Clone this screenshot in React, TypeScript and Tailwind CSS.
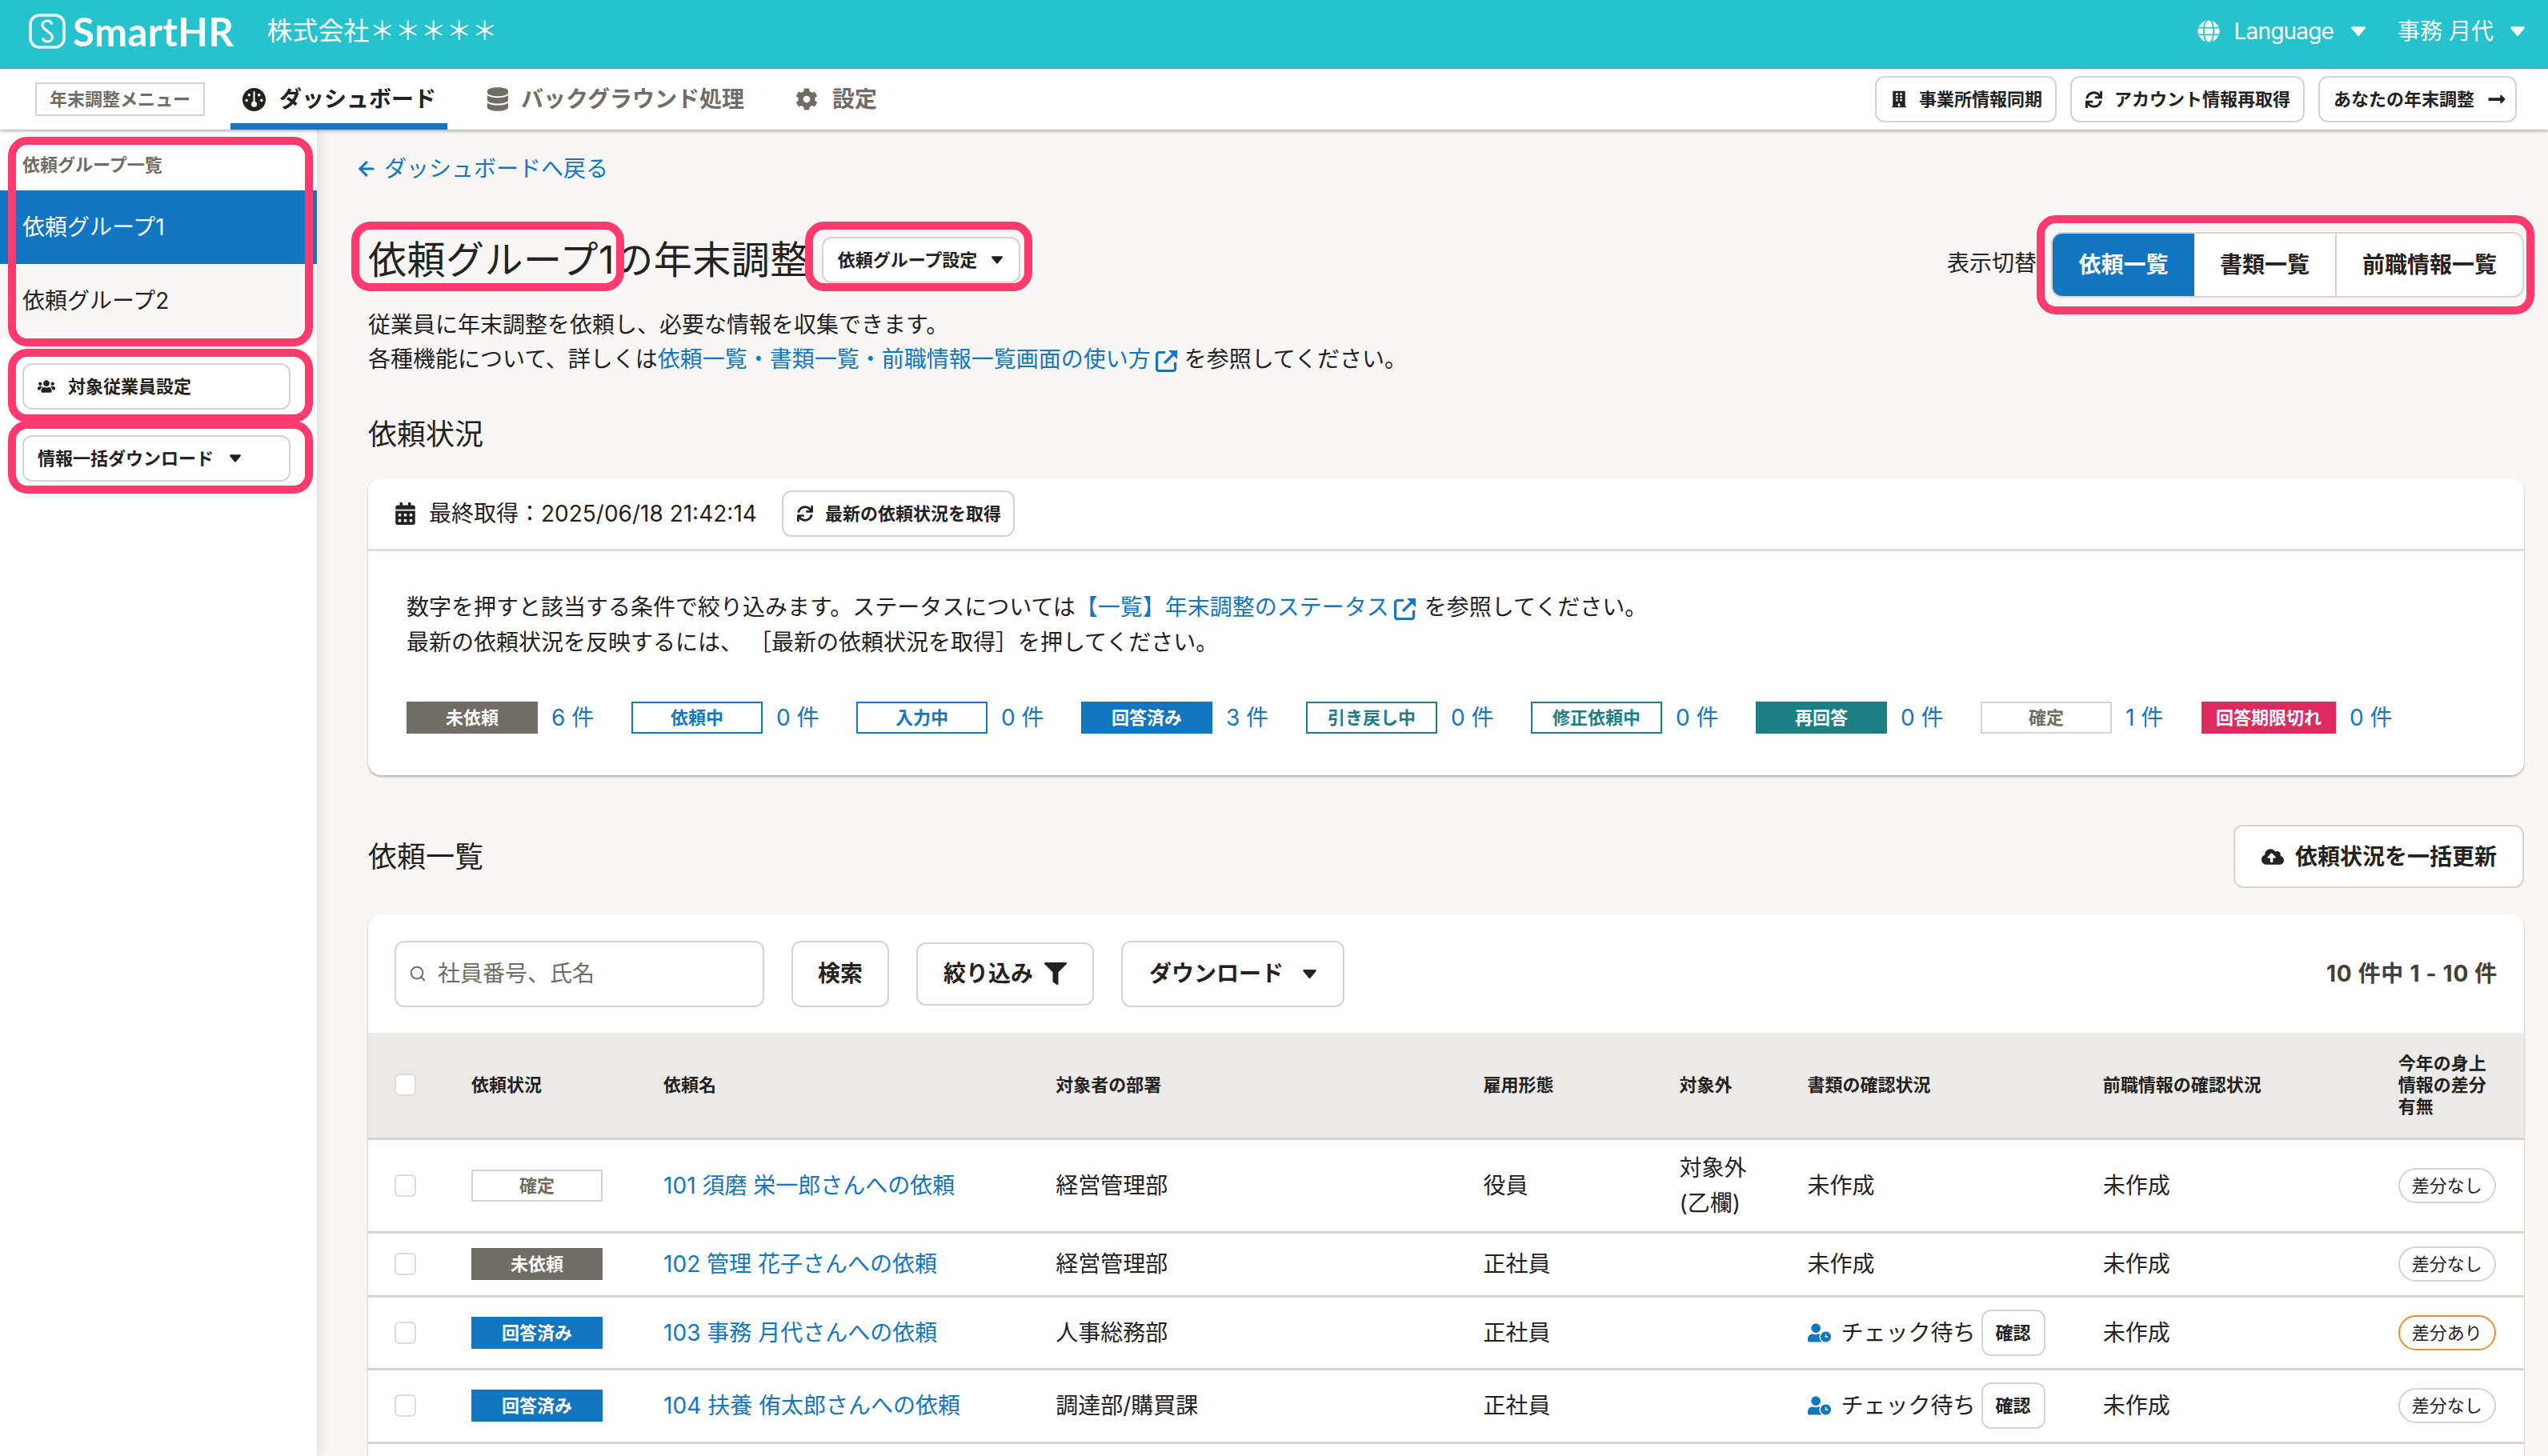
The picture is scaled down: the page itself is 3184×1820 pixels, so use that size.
import React from "react";
import {
  FaDatabase, FaCog, FaBuilding, FaSync, FaLongArrowAltRight, FaCalendarAlt,
  FaUsers, FaGlobe, FaCloudUploadAlt, FaFilter, FaUserClock,
} from "react-icons/fa";
import { Search, ArrowLeft } from "lucide-react";

const Caret = ({ className }: { className: string }) => (
  <svg viewBox="0 0 18 12" className={className} fill="currentColor">
    <path d="M1.6 0h14.8c1.3 0 2 1.5 1.1 2.5L10.1 11.4c-.6.8-1.6.8-2.2 0L.5 2.5C-.4 1.5.3 0 1.6 0z" />
  </svg>
);

const Gauge = () => (
  <svg viewBox="0 0 28 28" className="w-[29px] h-[29px]">
    <circle cx="14" cy="14" r="14" fill="#23221e" />
    <rect x="13" y="4" width="2" height="14" fill="white" />
    <circle cx="14" cy="19.5" r="3.4" fill="white" />
    <circle cx="5" cy="15" r="1.7" fill="white" />
    <circle cx="8" cy="8.5" r="1.7" fill="white" />
    <circle cx="20" cy="8.5" r="1.7" fill="white" />
    <circle cx="23" cy="15" r="1.7" fill="white" />
  </svg>
);

const LinkOut = () => (
  <svg viewBox="0 0 28 28" className="inline-block w-[28px] h-[28px] align-[-6px] ml-[6px]" fill="none" stroke="#1276c1" strokeWidth="3.2">
    <path d="M12 3.5H4.6a3 3 0 0 0-3 3v17.8a2.4 2.4 0 0 0 2.4 2.2h18a2.6 2.6 0 0 0 2.6-2.6V16" />
    <path d="M11 17 23 5" />
    <path d="M16 1h11v11z" fill="#1276c1" stroke="none" />
  </svg>
);

const Ring = ({ className }: { className: string }) => (
  <div className={"absolute pointer-events-none border-[10px] border-[#ff3a6e] rounded-[24px] z-30 " + className} />
);

const Btn = ({ className, children }: { className: string; children: React.ReactNode }) => (
  <button className={"flex items-center bg-white border-2 border-[#d6d3d0] rounded-[12px] font-bold text-[#23221e] whitespace-nowrap " + className}>
    {children}
  </button>
);

type Kind = "gray" | "blueO" | "blue" | "tealO" | "teal" | "line" | "red";
const kinds: Record<Kind, string> = {
  gray: "bg-[#706d65] text-white",
  blueO: "bg-white border-2 border-[#1276c1] text-[#1276c1]",
  blue: "bg-[#1276c1] text-white",
  tealO: "bg-white border-2 border-[#1d7f84] text-[#1d7f84]",
  teal: "bg-[#1d7f84] text-white",
  line: "bg-white border-2 border-[#d6d3d0] text-[#706d65]",
  red: "bg-[#dd2a5f] text-white",
};
const Badge = ({ kind, label, wide }: { kind: Kind; label: string; wide?: boolean }) => (
  <span className={"flex items-center justify-center h-[40px] text-[22px] font-bold whitespace-nowrap " + (wide ? "w-[168px] " : "w-[164px] ") + kinds[kind]}>
    {label}
  </span>
);

const stats: { kind: Kind; label: string; n: number; w: string; wide?: boolean }[] = [
  { kind: "gray", label: "未依頼", n: 6, w: "w-[281px]" },
  { kind: "blueO", label: "依頼中", n: 0, w: "w-[281px]" },
  { kind: "blueO", label: "入力中", n: 0, w: "w-[281px]" },
  { kind: "blue", label: "回答済み", n: 3, w: "w-[281px]" },
  { kind: "tealO", label: "引き戻し中", n: 0, w: "w-[281px]" },
  { kind: "tealO", label: "修正依頼中", n: 0, w: "w-[281px]" },
  { kind: "teal", label: "再回答", n: 0, w: "w-[281px]" },
  { kind: "line", label: "確定", n: 1, w: "w-[276px]" },
  { kind: "red", label: "回答期限切れ", n: 0, w: "w-auto", wide: true },
];

const Check = () => <span className="block w-[27px] h-[28px] rounded-[6px] bg-white border-2 border-[#dedcd9]" />;

const Diff = ({ on }: { on?: boolean }) => (
  <span className={"flex items-center justify-center w-[122px] h-[44px] rounded-full bg-white border-2 text-[22px] " + (on ? "border-[#f08c2e]" : "border-[#d6d3d0]")}>
    {on ? "差分あり" : "差分なし"}
  </span>
);

const Waiting = () => (
  <div className="flex items-center">
    <FaUserClock className="w-[29px] h-[24px] text-[#1276c1] shrink-0" />
    <span className="ml-[13px] w-[175px] whitespace-nowrap">チェック待ち</span>
    <Btn className="w-[80px] h-[58px] justify-center text-[22px]">確認</Btn>
  </div>
);

const rows: { h: string; badge: Kind; status: string; name: string; dept: string; type: string; ex?: boolean; wait?: boolean; on?: boolean }[] = [
  { h: "h-[117px]", badge: "line", status: "確定", name: "101 須磨 栄一郎さんへの依頼", dept: "経営管理部", type: "役員", ex: true },
  { h: "h-[80px]", badge: "gray", status: "未依頼", name: "102 管理 花子さんへの依頼", dept: "経営管理部", type: "正社員" },
  { h: "h-[91px]", badge: "blue", status: "回答済み", name: "103 事務 月代さんへの依頼", dept: "人事総務部", type: "正社員", wait: true, on: true },
  { h: "h-[92px]", badge: "blue", status: "回答済み", name: "104 扶養 侑太郎さんへの依頼", dept: "調達部/購買課", type: "正社員", wait: true },
];

const heads = ["依頼状況", "依頼名", "対象者の部署", "雇用形態", "対象外", "書類の確認状況", "前職情報の確認状況"];

export default function App() {
  return (
    <div className="relative w-[3184px] h-[1820px] overflow-hidden flex flex-col bg-[#f8f7f6] text-[#23221e] text-[28px] leading-[44px] font-['Inter','Noto_Sans_CJK_JP',sans-serif]">
      <header className="h-[86px] shrink-0 bg-[#25c3cd] text-white flex items-center pl-[36px] pr-[29px] pb-[8px]">
        <svg viewBox="0 0 46 44" className="w-[46px] h-[44px]" fill="none" stroke="white">
          <rect x="2" y="2" width="42" height="40" rx="11" strokeWidth="3.4" />
          <path d="M29 13.5c-1-3-3.4-4.5-6-4.5-3.4 0-6 2.5-6 5.5 0 6 12.5 9 12.5 15 0 3-2.6 5.5-6 5.5-3 0-5.5-1.7-6.3-4.5" strokeWidth="3.2" />
        </svg>
        <span className="ml-[9px] text-[49px] leading-[50px] font-bold tracking-[0.5px] font-['Lato',sans-serif]">SmartHR</span>
        <span className="ml-[41px] text-[32px]">株式会社＊＊＊＊＊</span>
        <div className="ml-auto flex items-center">
          <FaGlobe className="w-[28px] h-[28px]" />
          <span className="ml-[17px] tracking-[-0.8px]">Language</span>
          <Caret className="ml-[22px] w-[18px] h-[12px]" />
          <span className="ml-[40px]">事務 月代</span>
          <Caret className="ml-[21px] w-[18px] h-[12px]" />
        </div>
      </header>

      <nav className="relative z-20 h-[76px] shrink-0 bg-white flex items-center pl-[44px] pr-[39px] shadow-[0_2px_4px_rgba(0,0,0,0.3)]">
        <span className="flex items-center justify-center w-[212px] h-[42px] border-2 border-[#d6d3d0] text-[22px] font-bold text-[#706d65]">年末調整メニュー</span>
        <div className="ml-[32px] h-full w-[271px] flex items-center pl-[15px] pt-[8px] border-b-[8px] border-[#1276c1] font-bold">
          <Gauge />
          <span className="ml-[17px]">ダッシュボード</span>
        </div>
        <div className="ml-[50px] flex items-center font-bold text-[#706d65]">
          <FaDatabase className="w-[26px] h-[30px]" />
          <span className="ml-[16px]">バックグラウンド処理</span>
        </div>
        <div className="ml-[64px] flex items-center font-bold text-[#706d65]">
          <FaCog className="w-[28px] h-[28px]" />
          <span className="ml-[18px]">設定</span>
        </div>
        <div className="ml-auto flex items-center gap-[17px] text-[22px]">
          <Btn className="w-[227px] h-[58px] pl-[19px]"><FaBuilding className="w-[18px] h-[22px]" /><span className="ml-[16px]">事業所情報同期</span></Btn>
          <Btn className="w-[293px] h-[58px] pl-[17px]"><FaSync className="w-[21px] h-[21px]" /><span className="ml-[15px]">アカウント情報再取得</span></Btn>
          <Btn className="w-[248px] h-[58px] pl-[17px]"><span>あなたの年末調整</span><FaLongArrowAltRight className="ml-[16px] w-[24px] h-[24px]" /></Btn>
        </div>
      </nav>

      <div className="flex flex-1 min-h-0">
        <aside className="relative z-10 w-[396px] shrink-0 bg-white shadow-[0_0_16px_rgba(0,0,0,0.16)]">
          <div className="h-[76px] flex items-center pl-[28px] text-[22px] font-bold text-[#706d65] leading-[30px] pt-[12px]">依頼グループ一覧</div>
          <div className="h-[92px] flex items-center pl-[28px] bg-[#1276c1] text-white">依頼グループ1</div>
          <div className="h-[92px] flex items-center pl-[28px] bg-[#f8f7f6]">依頼グループ2</div>
          <div className="pl-[28px] pt-[32px] flex flex-col gap-[32px] text-[22px]">
            <Btn className="w-[335px] h-[58px] pl-[17px]"><FaUsers className="w-[22px] h-[22px]" /><span className="ml-[16px]">対象従業員設定</span></Btn>
            <Btn className="w-[335px] h-[58px] pl-[17px]"><span>情報一括ダウンロード</span><Caret className="ml-[20px] w-[14px] h-[10px]" /></Btn>
          </div>
        </aside>

        <main className="flex-1 min-w-0 pl-[64px] pr-[30px] pt-[27px]">
          <a className="flex items-center h-[44px] text-[#1276c1] -ml-[16px]">
            <ArrowLeft className="w-[28px] h-[28px]" strokeWidth={2.6} />
            <span className="ml-[8px]">ダッシュボードへ戻る</span>
          </a>

          <div className="mt-[57px] h-[82px] flex justify-between items-start">
            <div className="flex items-center h-[58px] mt-[6px]">
              <h1 className="text-[48px] leading-[58px] font-normal tracking-[0.5px] whitespace-nowrap">依頼グループ1の年末調整</h1>
              <Btn className="ml-[16px] w-[248px] h-[58px] pl-[18px] text-[22px]"><span>依頼グループ設定</span><Caret className="ml-[18px] w-[14px] h-[10px]" /></Btn>
            </div>
            <div className="flex items-center">
              <span className="mr-[18px] pb-[4px]">表示切替</span>
              <div className="flex h-[82px] w-[591px] bg-white border-2 border-[#d6d3d0] rounded-[14px] overflow-hidden font-bold">
                <span className="w-[177px] flex items-center justify-center bg-[#1276c1] text-white">依頼一覧</span>
                <span className="w-[178px] flex items-center justify-center border-r-2 border-[#d6d3d0]">書類一覧</span>
                <span className="flex-1 flex items-center justify-center">前職情報一覧</span>
              </div>
            </div>
          </div>

          <div className="mt-[13px] leading-[43px]">
            <p>従業員に年末調整を依頼し、必要な情報を収集できます。</p>
            <p>各種機能について、詳しくは<span className="text-[#1276c1]">依頼一覧・書類一覧・前職情報一覧画面の使い方<LinkOut /></span> を参照してください。</p>
          </div>

          <h2 className="mt-[48px] h-[48px] text-[36px] leading-[48px] font-normal">依頼状況</h2>

          <section className="mt-[31px] bg-white rounded-[16px] shadow-[0_2px_3px_rgba(0,0,0,0.28)]">
            <div className="h-[91px] flex items-center pl-[34px] border-b-[3px] border-[#dedbd8]">
              <FaCalendarAlt className="w-[25px] h-[28px]" />
              <span className="ml-[17px]">最終取得：2025/06/18 21:42:14</span>
              <Btn className="ml-[31px] w-[291px] h-[58px] pl-[17px] text-[22px]"><FaSync className="w-[20px] h-[20px]" /><span className="ml-[15px]">最新の依頼状況を取得</span></Btn>
            </div>
            <div className="pt-[48px] pb-[52px] pl-[48px]">
              <p className="leading-[44px]">
                数字を押すと該当する条件で絞り込みます。ステータスについては<span className="text-[#1276c1]">【一覧】年末調整のステータス<LinkOut /></span><span className="ml-[10px]">を参照してください。</span>
              </p>
              <p className="leading-[44px]">最新の依頼状況を反映するには、 ［最新の依頼状況を取得］を押してください。</p>
              <div className="mt-[52px] flex">
                {stats.map((s) => (
                  <div key={s.label} className={"flex items-center h-[40px] " + s.w}>
                    <Badge kind={s.kind} label={s.label} wide={s.wide} />
                    <span className="ml-[17px] text-[#1276c1]">{s.n} 件</span>
                  </div>
                ))}
              </div>
            </div>
          </section>

          <div className="mt-[62px] h-[79px] flex items-center justify-between">
            <h2 className="text-[36px] leading-[48px] font-normal">依頼一覧</h2>
            <Btn className="w-[363px] h-[79px] pl-[33px]"><FaCloudUploadAlt className="w-[28px] h-[28px]" /><span className="ml-[14px]">依頼状況を一括更新</span></Btn>
          </div>

          <section className="mt-[33px] bg-white rounded-t-[16px] shadow-[0_2px_3px_rgba(0,0,0,0.28)]">
            <div className="h-[148px] flex items-center px-[33px]">
              <div className="w-[462px] h-[83px] flex items-center pl-[16px] border-2 border-[#d6d3d0] rounded-[12px] text-[#706d65]">
                <Search className="w-[22px] h-[22px]" strokeWidth={2.2} />
                <span className="ml-[14px]">社員番号、氏名</span>
              </div>
              <Btn className="ml-[34px] w-[122px] h-[83px] justify-center">検索</Btn>
              <Btn className="ml-[34px] w-[222px] h-[79px] justify-center"><span>絞り込み</span><FaFilter className="ml-[14px] w-[28px] h-[28px]" /></Btn>
              <Btn className="ml-[34px] w-[279px] h-[83px] justify-center"><span>ダウンロード</span><Caret className="ml-[24px] w-[17px] h-[11px]" /></Btn>
              <span className="ml-auto font-bold text-[#42403b] tracking-[0.7px]">10 件中 1 - 10 件</span>
            </div>

            <table className="w-full table-fixed">
              <colgroup>
                <col className="w-[97px]" />
                <col className="w-[240px]" />
                <col className="w-[490px]" />
                <col className="w-[534px]" />
                <col className="w-[245px]" />
                <col className="w-[160px]" />
                <col className="w-[369px]" />
                <col className="w-[369px]" />
                <col className="w-[189px]" />
              </colgroup>
              <thead>
                <tr className="h-[132px] bg-[#eceae7] border-b-[3px] border-[#d6d3d0] text-[22px] leading-[27px]">
                  <th className="pl-[33px] font-normal"><Check /></th>
                  {heads.map((h) => (
                    <th key={h} className="pl-[32px] text-left font-bold">{h}</th>
                  ))}
                  <th className="pl-[32px] pr-[40px] text-left font-bold">今年の身上情報の差分有無</th>
                </tr>
              </thead>
              <tbody>
                {rows.map((r) => (
                  <tr key={r.name} className={r.h + " border-b-[3px] border-[#d6d3d0]"}>
                    <td className="pl-[33px]"><Check /></td>
                    <td className="pl-[32px]"><Badge kind={r.badge} label={r.status} /></td>
                    <td className="pl-[32px] text-[#1276c1] whitespace-nowrap">{r.name}</td>
                    <td className="pl-[32px]">{r.dept}</td>
                    <td className="pl-[32px]">{r.type}</td>
                    <td className="pl-[32px]">{r.ex ? <>対象外<br />(乙欄)</> : null}</td>
                    <td className="pl-[32px]">{r.wait ? <Waiting /> : "未作成"}</td>
                    <td className="pl-[32px]">未作成</td>
                    <td className="pl-[32px]"><Diff on={r.on} /></td>
                  </tr>
                ))}
              </tbody>
            </table>
            <div className="h-[40px]" />
          </section>
        </main>
      </div>

      <Ring className="left-[10px] top-[171px] w-[381px] h-[262px]" />
      <Ring className="left-[10px] top-[436px] w-[381px] h-[92px]" />
      <Ring className="left-[10px] top-[526px] w-[381px] h-[91px]" />
      <Ring className="left-[439px] top-[277px] w-[341px] h-[87px]" />
      <Ring className="left-[1006px] top-[277px] w-[284px] h-[87px]" />
      <Ring className="left-[2545px] top-[269px] w-[622px] h-[124px]" />
    </div>
  );
}
